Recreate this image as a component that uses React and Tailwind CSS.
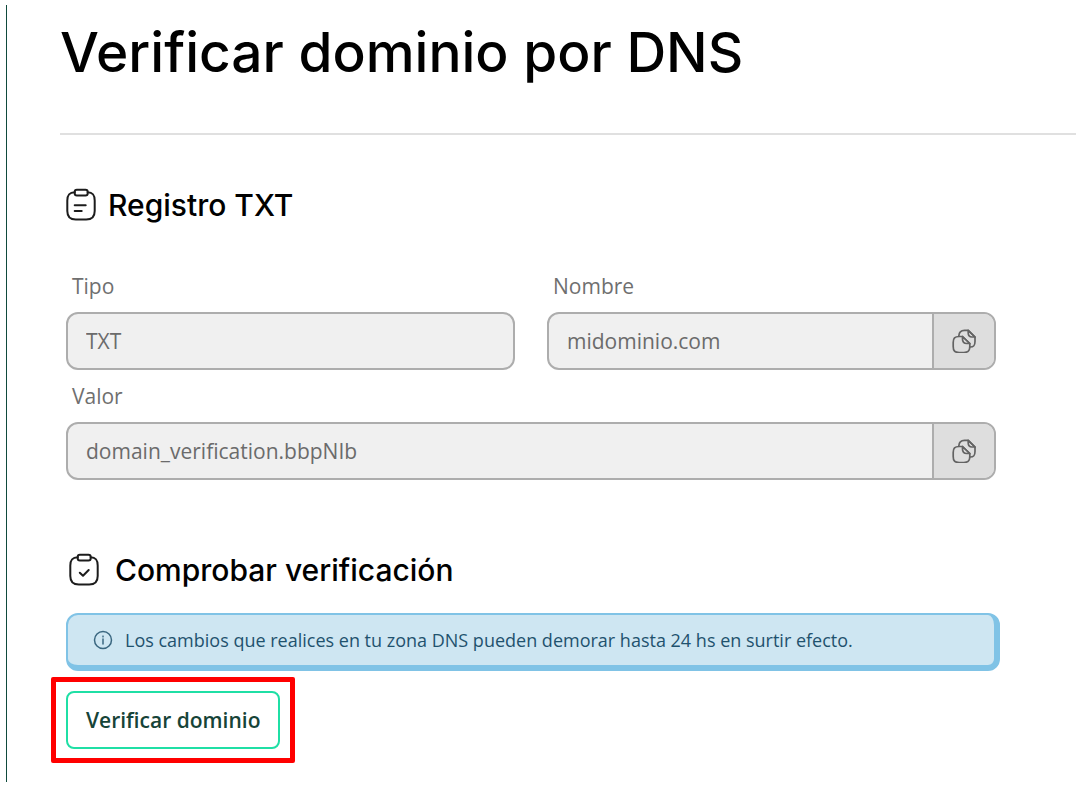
import React from 'react';

const ClipboardIcon = ({ children }) => (
    <svg className="w-[30px] h-9 shrink-0" viewBox="0 0 30 36" fill="none" stroke="#1c1c1c" strokeWidth={2} strokeLinecap="round" strokeLinejoin="round" aria-hidden="true">
        <path d="M8.700 5.200C3.200 5.500 1.300 8 1.300 13.500V24c0 6 2.500 8.600 8.500 8.600h10.400c6 0 8.500-2.600 8.500-8.600V13.500c0-5.500-1.700-8-7-8.300" />
        <rect x="8.700" y="2.700" width="13" height="5.800" rx="2.200" />
        {children}
    </svg>
);

const CopyIcon = () => (
    <svg className="w-6 h-6" viewBox="0 0 24 24" fill="none" stroke="#636363" strokeWidth={1.7} strokeLinecap="round" strokeLinejoin="round" aria-hidden="true">
        <path d="M1.200 13.500c0-4.500 1.500-6 6-6H10.500l7.300 7v3c0 4.500-1.500 6-6 6H7.200c-4.500 0-6-1.500-6-6z" />
        <path d="M10.500 7.500v2.500c0 3.200 1.200 4.500 4.300 4.500h3z" />
        <path d="M6.800 7C7 2.800 8.500 1.300 12.500 1.300h3.700l6.800 6.700v4.500c0 4-1.200 5.400-4.800 5.500" />
        <path d="M16.200 1.300v2.500C16.200 6.800 17.300 8 20 8h3z" />
    </svg>
);

const Field = ({ id, label, value, copy, className = '' }) => (
    <div className={className}>
        <label htmlFor={id} className="block mb-3 ml-1.5 text-[21px] leading-[28px] text-[#6f6f6f]">{label}</label>
        <div className="flex h-[58px] rounded-xl border-2 border-[#adadad] bg-[#f0f0f0] overflow-hidden">
            <input
                id={id}
                type="text"
                readOnly
                value={value}
                className="flex-1 min-w-0 px-[18px] text-[21px] leading-[28px] text-[#6b6b6b] bg-transparent outline-none"
            />
            {copy && (
                <button type="button" aria-label={`Copiar ${label}`} className="w-[62px] shrink-0 flex items-center justify-center border-l-2 border-[#adadad] bg-[#dedede]">
                    <CopyIcon />
                </button>
            )}
        </div>
    </div>
);

const App = () => {
    return (
        <div className="py-[5px] pl-1.5 bg-white font-['Open_Sans',sans-serif]">
            <main className="border-l border-[#0f4a3c] pt-[15px] pb-[19px] pl-[53px]">
                <h1 className="font-['Inter',sans-serif] font-medium text-[55px] leading-[64px] text-black">Verificar dominio por DNS</h1>
                <hr className="mt-[49px] border-t-2 border-[#e0e0e0]" />

                <div className="ml-1.5 mr-20">
                    {/* TXT record */}
                    <section>
                        <div className="flex items-center gap-3 mt-[52px]">
                            <ClipboardIcon>
                                <path d="M8.700 18.300h11M8.700 24h7" />
                            </ClipboardIcon>
                            <h2 className="font-['Inter',sans-serif] font-medium text-[30px] leading-[36px] text-black">Registro TXT</h2>
                        </div>
                        <div className="grid grid-cols-2 gap-x-8 gap-y-3 mt-[49px]">
                            <Field id="tipo" label="Tipo" value="TXT" />
                            <Field id="nombre" label="Nombre" value="midominio.com" copy />
                            <Field id="valor" label="Valor" value="domain_verification.bbpNIb" copy className="col-span-2" />
                        </div>
                    </section>

                    {/* Verification */}
                    <section>
                        <div className="flex items-center gap-4 mt-[72px] ml-[3px]">
                            <ClipboardIcon>
                                <path d="M10.800 20.800l3.200 3 5.700-5.800" />
                            </ClipboardIcon>
                            <h2 className="font-['Inter',sans-serif] font-medium text-[30px] leading-[36px] text-black">Comprobar verificación</h2>
                        </div>
                        <div className="flex items-center gap-3 h-[58px] mt-[25px] -mr-1 pl-[25px] rounded-xl border-2 border-r-[6px] border-b-[6px] border-[#80c3e6] bg-[#cee6f2]">
                            <svg className="w-5 h-5 shrink-0" viewBox="0 0 20 20" fill="none" stroke="#3a6780" strokeWidth={1.5} strokeLinecap="round" aria-hidden="true">
                                <circle cx="10" cy="10" r="8.500" />
                                <path d="M10 9v5" />
                                <circle cx="10" cy="6.500" r="0.300" />
                            </svg>
                            <p className="text-[18px] leading-[24px] text-[#1f526e]">Los cambios que realices en tu zona DNS pueden demorar hasta 24 hs en surtir efecto.</p>
                        </div>
                        <div className="w-fit mt-1.5 -ml-[15px] px-2.5 py-[9px] border-[5px] border-[#ff0000] rounded-xs">
                            <button type="button" className="block h-[58px] px-[18px] rounded-lg border-2 border-[#1fdfa5] bg-white text-[21px] leading-[28px] font-semibold text-[#164438]">
                                Verificar dominio
                            </button>
                        </div>
                    </section>
                </div>
            </main>
        </div>
    );
};

export default App;
